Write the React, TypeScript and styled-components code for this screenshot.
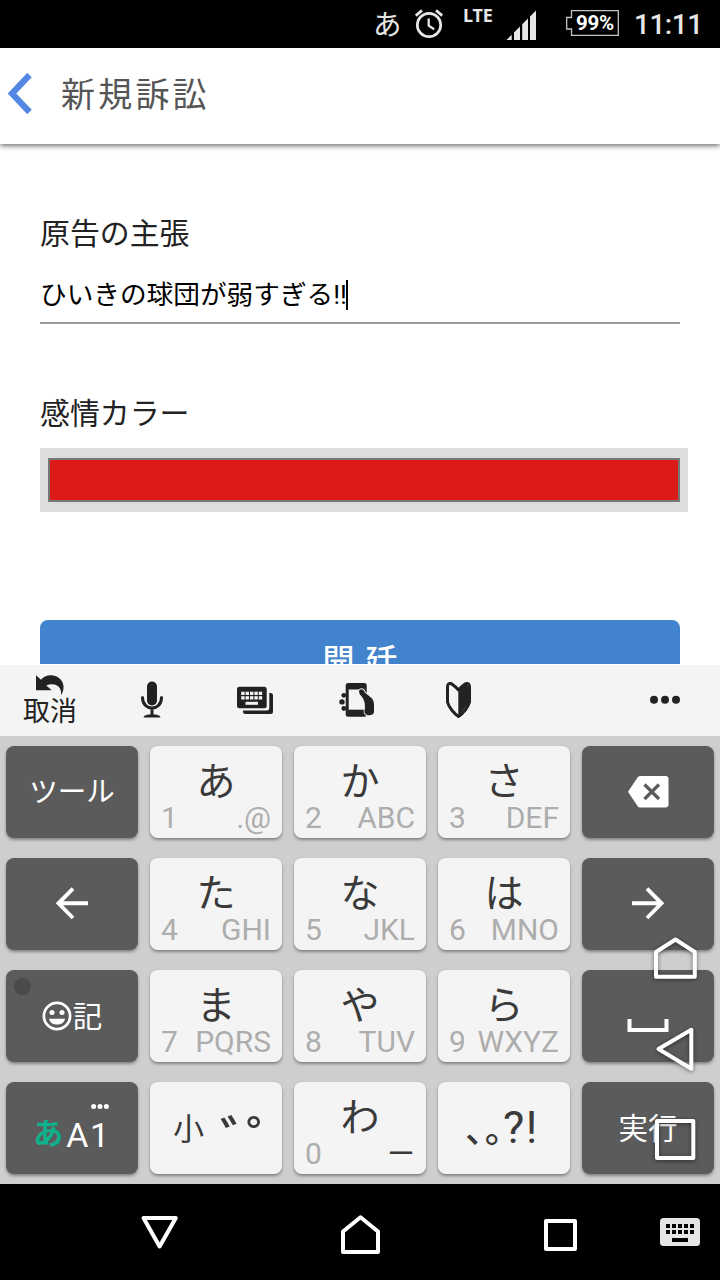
import React from "react";
import styled, { createGlobalStyle } from "styled-components";

const JP = `"Noto Sans CJK JP", sans-serif`;
const LATIN = `Roboto, "Noto Sans CJK JP", sans-serif`;

const GlobalStyle = createGlobalStyle`
  *, *::before, *::after { box-sizing: border-box; }
  body { margin: 0; background: #fff; font-family: ${LATIN}; }
  svg { display: block; flex: none; }
`;

const Screen = styled.div`
  position: relative;
  display: flex;
  flex-direction: column;
  width: 720px;
  height: 1280px;
  overflow: hidden;
  background: #fff;
`;

/* ---------- status bar ---------- */

const StatusBar = styled.div`
  display: flex;
  align-items: center;
  flex: none;
  height: 48px;
  padding-left: 373px;
  background: #000;
  color: #e6e6e6;
  white-space: nowrap;
`;

const ImeMark = styled.span`
  width: 41px;
  padding-bottom: 4px;
  font: 400 28.5px/41px ${JP};
`;

const Network = styled.span`
  width: 43px;
  margin-left: 19px;
  padding-bottom: 18px;
  font: 700 18px/18px "Noto Sans", sans-serif;
  letter-spacing: -0.2px;
`;

const Battery = styled.div`
  display: grid;
  width: 53px;
  height: 26px;
  margin: 0 15px 2px 29px;
  > * { grid-area: 1 / 1; }
`;

const BatteryLevel = styled.span`
  padding-left: 10px;
  color: #fff;
  font: 700 20.5px/26px Roboto, sans-serif;
  letter-spacing: -0.2px;
`;

const Clock = styled.span`
  padding-top: 2px;
  font: 500 28px/48px Roboto, sans-serif;
  letter-spacing: -0.5px;
`;

/* ---------- page ---------- */

const Header = styled.header`
  position: relative;
  display: flex;
  align-items: center;
  flex: none;
  height: 96px;
  padding-left: 6px;
  background: #fff;
  box-shadow: 0 2px 5px rgba(0, 0, 0, 0.55);
`;

const Title = styled.h1`
  margin: 0 0 0 25px;
  padding-bottom: 7px;
  color: #555;
  font: 400 34px/48px ${JP};
  letter-spacing: 3.2px;
`;

const BackArrow = styled.span`
  padding-bottom: 5px;
`;

const Form = styled.main`
  display: flex;
  flex-direction: column;
  flex: none;
  height: 520px;
  padding: 70px 40px 0;
  overflow: hidden;
  > * { flex: none; }
`;

const Label = styled.label`
  height: 40px;
  color: #222;
  font-size: 29.9px;
  line-height: 40px;
`;

const TextField = styled.div`
  display: flex;
  align-items: center;
  height: 56px;
  margin: 14px 0 70px;
  border-bottom: 2px solid #999;
  color: #000;
  font-size: 26.67px;
  line-height: 40px;
`;

const Caret = styled.span`
  width: 2px;
  height: 30px;
  margin-left: -1px;
  background: #000;
`;

const ColorField = styled.div`
  width: 648px;
  height: 64px;
  margin-top: 14px;
  padding: 10px 8px;
  background: #ddd;
`;

const Swatch = styled.div`
  height: 44px;
  border: 2px solid #777;
  background: #dc1b19;
`;

const Submit = styled.button`
  height: 80px;
  margin-top: 108px;
  padding: 0 0 4px 11px;
  border: 0;
  border-radius: 8px;
  background: #4283cd;
  color: #fff;
  font: 500 32px/76px ${JP};
  letter-spacing: 11px;
`;

/* ---------- keyboard ---------- */

const ToolStrip = styled.div`
  display: flex;
  align-items: center;
  flex: none;
  height: 72px;
  padding-bottom: 1px;
  border-top: 1px solid #fff;
  background: #f4f4f4;
  color: #222;
`;

const Tool = styled.div<{ $w?: number; $end?: boolean }>`
  display: flex;
  flex-direction: column;
  align-items: center;
  justify-content: center;
  width: ${(p) => p.$w ?? 102}px;
  ${(p) => p.$end && "margin-left: auto;"}
`;

const UndoText = styled.span`
  height: 28px;
  font: 400 27px/26px ${JP};
`;

const Keyboard = styled.div`
  display: grid;
  grid-template-columns: repeat(5, 132px);
  grid-auto-rows: 92px;
  gap: 20px 12px;
  flex: none;
  height: 448px;
  padding: 10px 6px;
  background: #cecece;
`;

const KeyBase = styled.div`
  border-radius: 8px;
  box-shadow: 0 2px 3px rgba(0, 0, 0, 0.36);
  white-space: nowrap;
`;

const CharKey = styled(KeyBase)`
  display: flex;
  flex-direction: column;
  background: #f4f4f4;
  color: #3a3a3a;
`;

const Kana = styled.span`
  height: 58px;
  text-align: center;
  font: 400 39px/64px ${JP};
`;

const Hints = styled.span`
  display: flex;
  justify-content: space-between;
  padding: 0 11px;
  color: #adadad;
  font: 400 30px/27px Roboto, sans-serif;
`;

const LongMark = styled.span`
  color: #3a3a3a;
  font: 400 28px/25px ${JP};
`;

const SymbolKey = styled(KeyBase)`
  display: flex;
  background: #f4f4f4;
  color: #3a3a3a;
`;

const SmallKana = styled.span`
  padding-left: 23px;
  font: 400 31px/90px ${JP};
`;

const VoicedMarks = styled.span`
  padding-left: 16px;
  font: 500 54px/111px ${JP};
  letter-spacing: -28px;
`;

const Punctuation = styled.span`
  padding-left: 28px;
  font: 500 36px/90px ${JP};
  letter-spacing: 1px;
`;

const Marks = styled.span`
  font: 400 45px/92px Roboto, sans-serif;
  letter-spacing: 1.5px;
  margin-left: -1px;
`;

const ActionKey = styled(KeyBase)`
  position: relative;
  display: flex;
  align-items: center;
  justify-content: center;
  background: #5b5b5b;
  color: #fff;
  font: 400 29.5px/88px ${JP};
`;

const ActionText = styled.span<{ $size?: number }>`
  padding-bottom: 4px;
  font-size: ${(p) => p.$size ?? 29.5}px;
`;

const Notch = styled.i`
  position: absolute;
  top: 8px;
  left: 8px;
  width: 17px;
  height: 17px;
  border-radius: 50%;
  background: #4a4a4a;
`;

const ModeDots = styled.span`
  position: absolute;
  top: 21px;
  left: 85px;
`;

const ModeKana = styled.span`
  padding-top: 6px;
  color: #0fb08c;
  font: 700 30px/98px ${JP};
`;

const ModeLatin = styled.span`
  margin-left: 3px;
  padding-top: 14px;
  font: 400 34px/92px Roboto, sans-serif;
  letter-spacing: 1.5px;
`;

/* ---------- navigation ---------- */

const NavBar = styled.nav`
  display: flex;
  align-items: center;
  flex: none;
  height: 96px;
  padding-left: 60px;
  background: #000;
`;

const NavSlot = styled.div<{ $w: number }>`
  display: flex;
  justify-content: center;
  width: ${(p) => p.$w}px;
`;

const FloatingNav = styled.div`
  position: absolute;
  top: 930px;
  left: 645px;
  svg { overflow: visible; filter: drop-shadow(0 1px 2px rgba(0, 0, 0, 0.5)); }
`;

type ArtProps = { w: number; h: number; x?: number; y?: number; children: React.ReactNode };
const Art = ({ w, h, x = 0, y = 0, children }: ArtProps) => (
  <svg width={w} height={h} viewBox={`${x} ${y} ${w} ${h}`} fill="none">
    {children}
  </svg>
);

const CharacterKey = ({ kana, digit, hint }: { kana: string; digit: string; hint: string }) => (
  <CharKey>
    <Kana>{kana}</Kana>
    <Hints>
      <span>{digit}</span>
      {hint === "ー" ? <LongMark>{hint}</LongMark> : <span>{hint}</span>}
    </Hints>
  </CharKey>
);

const cols = [0, 1, 2, 3, 4];

export default function App() {
  return (
    <>
      <GlobalStyle />
      <Screen>
        <StatusBar>
          <ImeMark>あ</ImeMark>
          <Art w={30} h={30} x={414} y={9}>
            <g stroke="#e6e6e6" strokeWidth="2.7">
              <circle cx="429" cy="25" r="11.7" />
              <path d="M415.8 15.6 422 10.4M442.2 15.6 436 10.4" />
              <path d="M428.7 18.5V25.6L434.2 29.2" strokeWidth="2.3" />
            </g>
          </Art>
          <Network>LTE</Network>
          <Art w={31} h={31} y={-1}>
            <path
              fill="#e6e6e6"
              d="M.5 30 5.7 24.8V30zM8 30V22.5L14 16.5V30zM16.2 30V14.3L22 8.5V30zM24 30V6.5L30 .5V30z"
            />
          </Art>
          <Battery>
            <Art w={53} h={26}>
              <path d="M5.5 .7H52.3V25.3H5.5V19H.7V7.5H5.5Z" stroke="#c4c4c4" strokeWidth="1.3" />
            </Art>
            <BatteryLevel>99%</BatteryLevel>
          </Battery>
          <Clock>11:11</Clock>
        </StatusBar>

        <Header>
          <BackArrow>
            <Art w={30} h={44} x={6} y={74}>
              <path d="M29.5 77 12 95.5 29.5 114" stroke="#5487e4" strokeWidth="6.2" />
            </Art>
          </BackArrow>
          <Title>新規訴訟</Title>
        </Header>

        <Form>
          <Label>原告の主張</Label>
          <TextField>
            <span>ひいきの球団が弱すぎる!!</span>
            <Caret />
          </TextField>
          <Label>感情カラー</Label>
          <ColorField>
            <Swatch />
          </ColorField>
          <Submit>開廷</Submit>
        </Form>

        <ToolStrip>
          <Tool $w={100}>
            <Art w={30} h={22} x={35} y={675}>
              <path
                fill="#222"
                d="M36 675.2V690.3H51.7L46.3 685.6C54 681.5 63 686.5 60.8 695.5C67 687 62.5 675.3 50.5 675.3C46.5 675.3 43.5 677 41 679.8Z"
              />
            </Art>
            <UndoText>取消</UndoText>
          </Tool>
          <Tool $w={103}>
            <Art w={60} h={60} x={122} y={670}>
              <rect x="147" y="681.5" width="10" height="24" rx="5" fill="#222" />
              <path d="M142.5 697.5C142.5 711.5 161.5 711.5 161.5 697.5M152 708V715" stroke="#222" strokeWidth="3" strokeLinecap="round" />
              <path d="M143.5 717.6C144 715 147 714.5 152 714.5S160 715 160.5 717.6Z" fill="#222" />
            </Art>
          </Tool>
          <Tool>
            <Art w={60} h={60} x={224} y={670}>
              <rect x="237" y="686.7" width="29.7" height="21.6" rx="2.5" fill="#222" />
              <path d="M269.3 693H270.5Q273 693 273 695.5V711.5Q273 714 270.5 714H245.5Q243 714 243 711.5V710.5H267Q269.3 710.5 269.3 708Z" fill="#222" />
              <g fill="#f4f4f4">
                {cols.map((c) => (
                  <React.Fragment key={c}>
                    <rect x={241.2 + c * 4.4} y="691.7" width="3.4" height="3.3" />
                    <rect x={241.2 + c * 4.4} y="696.2" width="3.4" height="3.3" />
                  </React.Fragment>
                ))}
                <rect x="245.5" y="701.8" width="12.5" height="3" />
              </g>
            </Art>
          </Tool>
          <Tool>
            <Art w={60} h={60} x={326} y={670}>
              <g fill="#222">
                <circle cx="343.8" cy="695.3" r="2.4" />
                <circle cx="342" cy="701.9" r="2.7" />
                <circle cx="343.8" cy="708.5" r="2.4" />
                <rect x="345.7" y="683" width="21" height="33.8" rx="2.5" />
              </g>
              <path d="M348.7 689.5H364V709.7H348.7z" fill="#f4f4f4" />
              <path
                d="M359 691.5C359.5 688 364 688.5 364.8 692.5L371.5 698C373 699.3 374 702 374 705V712C374 715.5 367 716.5 365 713.5C363.5 711 365.5 709 365 705.5C364.5 702 364.5 699 359.8 694.5Z"
                fill="#222"
                stroke="#f4f4f4"
                strokeWidth="1.8"
                paintOrder="stroke"
              />
            </Art>
          </Tool>
          <Tool>
            <Art w={60} h={60} x={428} y={670}>
              <path
                d="M458.5 690C456.5 687.5 454 685.5 451.5 683.7Q447.5 682.5 447.5 687V702C448.5 707 454 713.5 458.5 716.5C463 713.5 468.5 707 469.5 702V687Q469.5 682.5 465.5 683.7C463 685.5 460.5 687.5 458.5 690Z"
                stroke="#222"
                strokeWidth="3"
                strokeLinejoin="round"
              />
              <path d="M458.3 690 465.5 683.7 469.5 687V702L458.3 716.5Z" fill="#222" />
            </Art>
          </Tool>
          <Tool $w={110} $end>
            <Art w={32} h={11}>
              <g fill="#222">
                <circle cx="5" cy="4.8" r="4" />
                <circle cx="16" cy="4.8" r="4" />
                <circle cx="27" cy="4.8" r="4" />
              </g>
            </Art>
          </Tool>
        </ToolStrip>

        <Keyboard>
          <ActionKey>
            <ActionText $size={28.5}>ツール</ActionText>
          </ActionKey>
          <CharacterKey kana="あ" digit="1" hint=".@" />
          <CharacterKey kana="か" digit="2" hint="ABC" />
          <CharacterKey kana="さ" digit="3" hint="DEF" />
          <ActionKey>
            <Art w={41} h={32}>
              <path d="M12 0H37.5Q40.5 0 40.5 3V28.5Q40.5 31.5 37.5 31.5H12Q10.5 31.5 9.5 30L0 15.75 9.5 1.5Q10.5 0 12 0Z" fill="#fff" />
              <path d="M16.5 8.5 31 23M31 8.5 16.5 23" stroke="#5b5b5b" strokeWidth="3.2" />
            </Art>
          </ActionKey>

          <ActionKey>
            <Art w={32} h={34}>
              <path d="M32 16.3H3M17 1.6 2.5 16.3 17 31" stroke="#fff" strokeWidth="3.9" />
            </Art>
          </ActionKey>
          <CharacterKey kana="た" digit="4" hint="GHI" />
          <CharacterKey kana="な" digit="5" hint="JKL" />
          <CharacterKey kana="は" digit="6" hint="MNO" />
          <ActionKey>
            <Art w={32} h={34}>
              <path d="M0 16.3H29M15 1.6 29.5 16.3 15 31" stroke="#fff" strokeWidth="3.9" />
            </Art>
          </ActionKey>

          <ActionKey>
            <Notch />
            <Art w={31} h={30}>
              <circle cx="15" cy="15" r="13.1" stroke="#fff" strokeWidth="2.7" />
              <g fill="#fff">
                <circle cx="10" cy="11.5" r="2.5" />
                <circle cx="20" cy="11.5" r="2.5" />
                <path d="M7 17.7H23C22 25.5 8 25.5 7 17.7Z" />
              </g>
            </Art>
            <ActionText>記</ActionText>
          </ActionKey>
          <CharacterKey kana="ま" digit="7" hint="PQRS" />
          <CharacterKey kana="や" digit="8" hint="TUV" />
          <CharacterKey kana="ら" digit="9" hint="WXYZ" />
          <ActionKey>
            <Art w={42} h={32}>
              <path d="M2.5 19V30H39.5V19" stroke="#fff" strokeWidth="4" />
            </Art>
          </ActionKey>

          <ActionKey>
            <ModeDots>
              <Art w={20} h={7}>
                <g fill="#fff">
                  <circle cx="2.6" cy="3.5" r="2.5" />
                  <circle cx="9" cy="3.5" r="2.5" />
                  <circle cx="15.4" cy="3.5" r="2.5" />
                </g>
              </Art>
            </ModeDots>
            <ModeKana>あ</ModeKana>
            <ModeLatin>A1</ModeLatin>
          </ActionKey>
          <SymbolKey>
            <SmallKana>小</SmallKana>
            <VoicedMarks>゛゜</VoicedMarks>
          </SymbolKey>
          <CharacterKey kana="わ" digit="0" hint="ー" />
          <SymbolKey>
            <Punctuation>､｡</Punctuation>
            <Marks>?!</Marks>
          </SymbolKey>
          <ActionKey>
            <ActionText>実行</ActionText>
          </ActionKey>
        </Keyboard>

        <NavBar>
          <NavSlot $w={200}>
            <Art w={40} h={40} x={140} y={1212}>
              <path d="M143.5 1218H175.8L159.6 1246.5Z" stroke="#fff" strokeWidth="4" strokeLinejoin="round" />
            </Art>
          </NavSlot>
          <NavSlot $w={200}>
            <Art w={44} h={44} x={338} y={1210}>
              <path d="M343 1252V1231.5L360.5 1217.3 378 1231.5V1252Z" stroke="#fff" strokeWidth="4" strokeLinejoin="round" />
            </Art>
          </NavSlot>
          <NavSlot $w={200}>
            <Art w={40} h={40} x={540} y={1212}>
              <rect x="546" y="1221" width="29" height="28" stroke="#fff" strokeWidth="4" strokeLinejoin="round" />
            </Art>
          </NavSlot>
          <NavSlot $w={40}>
            <Art w={40} h={28}>
              <rect width="40" height="28" rx="3.5" fill="#e4e4e4" />
              <g fill="#000">
                {cols.map((c) => (
                  <React.Fragment key={c}>
                    <rect x={6 + c * 6} y="6" width="4" height="4" />
                    <rect x={6 + c * 6} y="12" width="4" height="4" />
                  </React.Fragment>
                ))}
                <rect x="12" y="20" width="16" height="4" />
              </g>
            </Art>
          </NavSlot>
        </NavBar>

        <FloatingNav>
          <Art w={60} h={240} x={645} y={930}>
            <g stroke="#fff" strokeWidth="4" strokeLinejoin="round">
              <path d="M656 976.7V952L675.5 939.5 694.8 952V976.7Z" />
              <path d="M658.5 1049 691.3 1029.8V1068.7Z" />
              <rect x="657" y="1121" width="36.3" height="37" />
            </g>
          </Art>
        </FloatingNav>
      </Screen>
    </>
  );
}
